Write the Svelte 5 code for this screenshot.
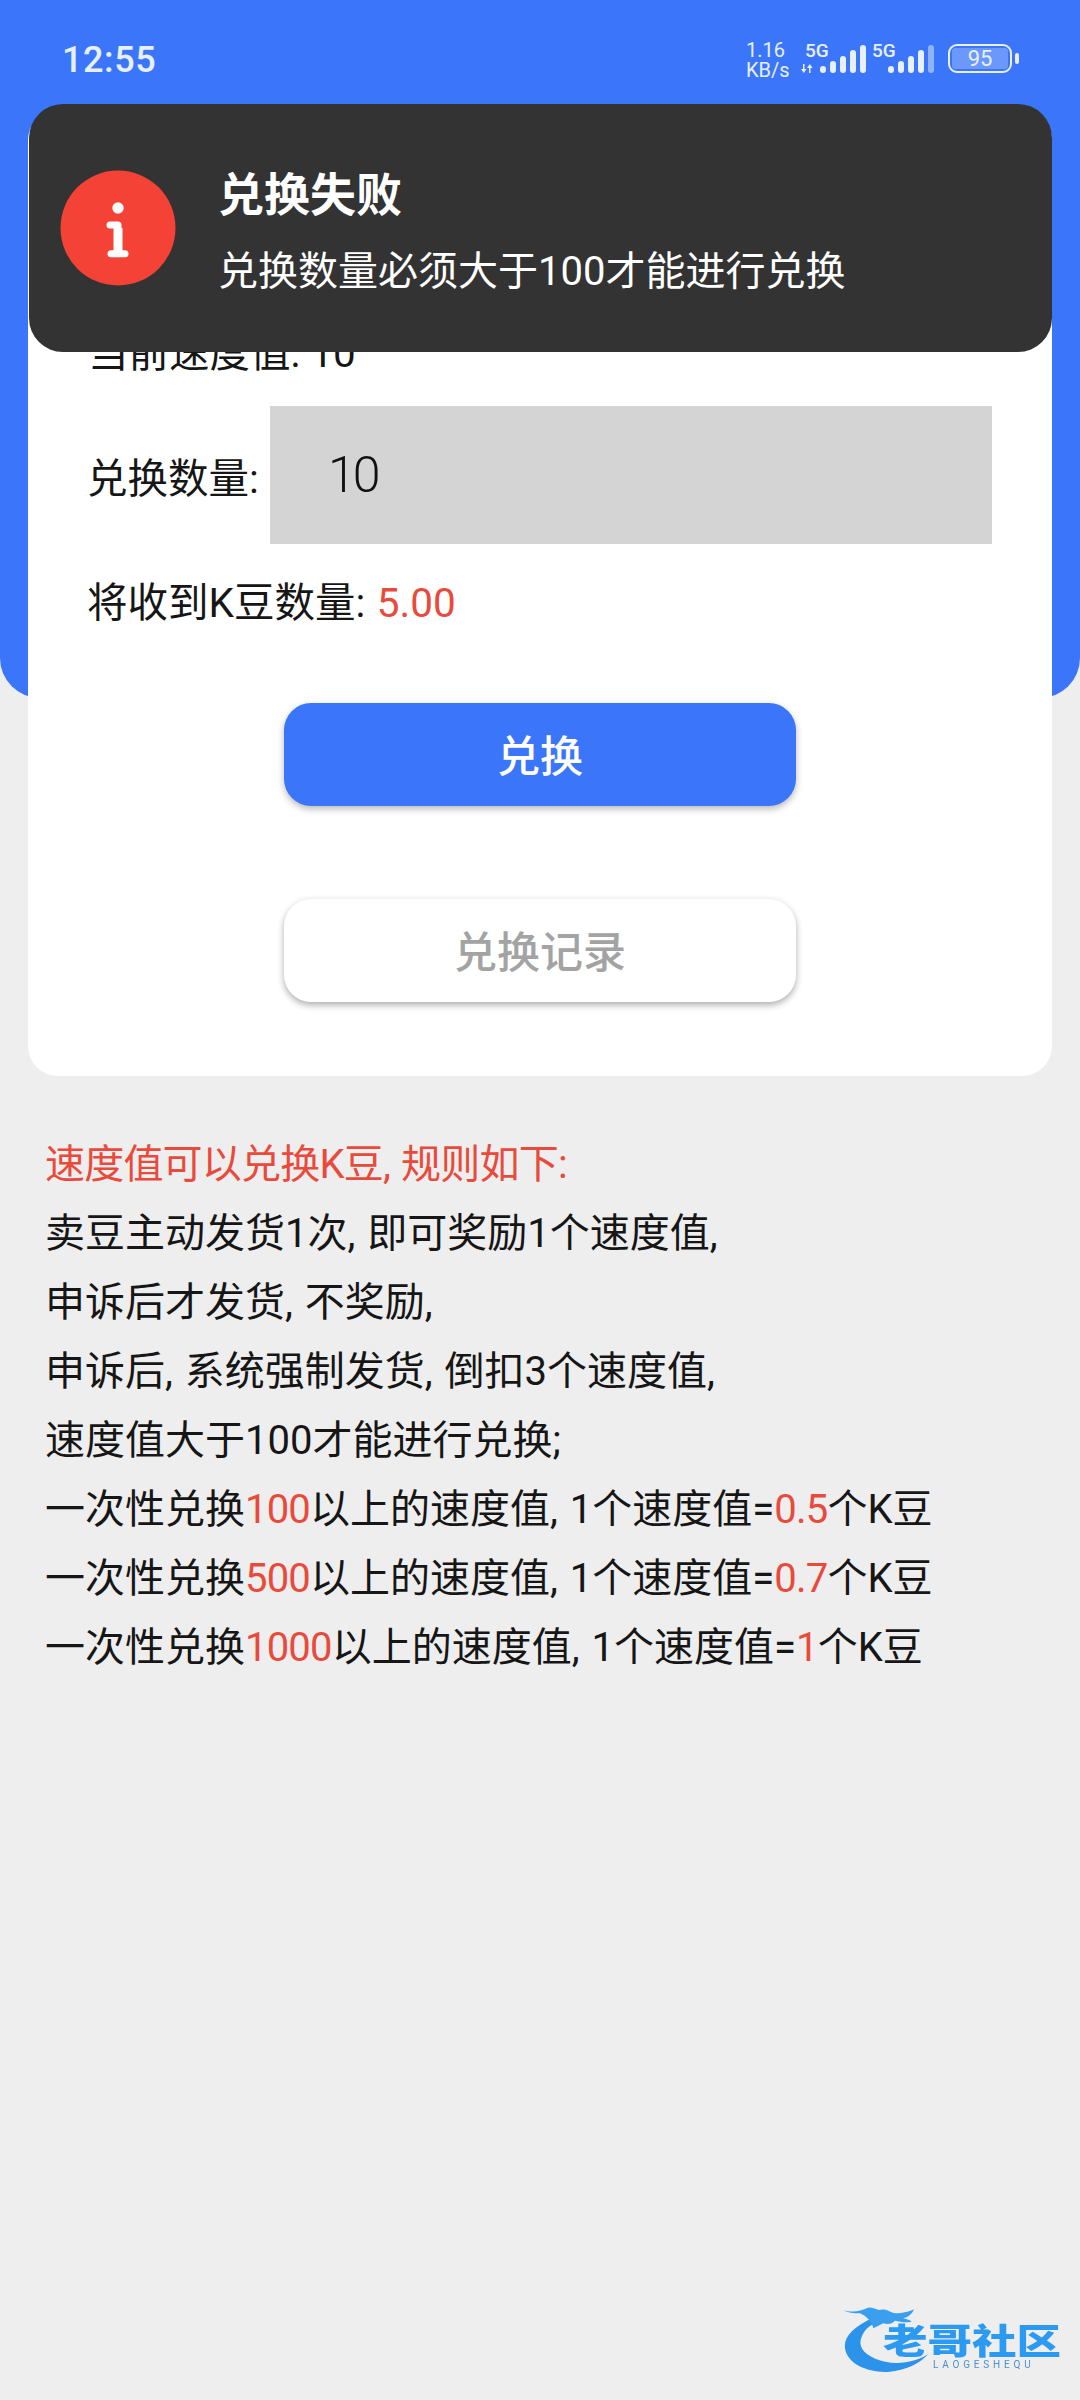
<script>
  const bars = [7, 12, 17, 23, 28];
  const rules = [
    [['速度值可以兑换K豆, 规则如下:', 1]],
    [['卖豆主动发货1次, 即可奖励1个速度值,', 0]],
    [['申诉后才发货, 不奖励,', 0]],
    [['申诉后, 系统强制发货, 倒扣3个速度值,', 0]],
    [['速度值大于100才能进行兑换;', 0]],
    [['一次性兑换', 0], ['100', 1], ['以上的速度值, 1个速度值=', 0], ['0.5', 1], ['个K豆', 0]],
    [['一次性兑换', 0], ['500', 1], ['以上的速度值, 1个速度值=', 0], ['0.7', 1], ['个K豆', 0]],
    [['一次性兑换', 0], ['1000', 1], ['以上的速度值, 1个速度值=', 0], ['1', 1], ['个K豆', 0]]
  ];
</script>

<div class="page">
  <header class="hero">
    <div class="status">
      <span class="time">12:55</span>
      <div class="indicators">
        <div class="speed"><span>1.16</span><span>KB/s</span></div>
        <div class="signal first">
          <span class="net">5G</span>
          <svg class="arrows" width="12" height="9" viewBox="0 0 12 9"><path d="M3.500 0v5H5.500L2.800 9 0 5h2V0zM8 9V4H6l2.800-4L11.500 4H9.500v5z" fill="#e8f0ff" /></svg>
          <div class="bars">{#each bars as h}<i style="height:{h}px"></i>{/each}</div>
        </div>
        <div class="signal second">
          <span class="net">5G</span>
          <div class="bars">{#each bars as h, i}<i class:dim={i === 4} style="height:{h}px"></i>{/each}</div>
        </div>
        <div class="battery"><div class="cell"><span>95</span></div><b></b></div>
      </div>
    </div>
  </header>

  <main class="card">
    <p class="current">当前速度值: 10</p>
    <div class="amount">
      <label for="qty">兑换数量:</label>
      <input id="qty" value="10" />
    </div>
    <p class="receive">将收到K豆数量: <em>5.00</em></p>
    <button class="primary">兑换</button>
    <button class="secondary">兑换记录</button>
  </main>

  <section class="rules">
    {#each rules as line}
      <p>{#each line as part}{#if part[1]}<em>{part[0]}</em>{:else}{part[0]}{/if}{/each}</p>
    {/each}
  </section>

  <div class="toast">
    <svg class="alert" width="116" height="116" viewBox="0 0 116 116">
      <circle cx="58" cy="58" r="57.500" fill="#f44336" />
      <circle cx="58" cy="38" r="5.700" fill="#fff" />
      <path d="M50 55h8v28" fill="none" stroke="#fff" stroke-width="7" stroke-linecap="round" stroke-linejoin="round" />
      <path d="M58 58v25" fill="none" stroke="#fff" stroke-width="9" />
      <path d="M51 83.700h14" fill="none" stroke="#fff" stroke-width="7" stroke-linecap="round" />
    </svg>
    <div class="msg">
      <strong>兑换失败</strong>
      <span>兑换数量必须大于100才能进行兑换</span>
    </div>
  </div>

  <div class="logo">
    <svg width="260" height="120" viewBox="0 0 780 360">
      <path d="M165 110C100 140 70 170 75 205C82 255 150 280 210 275C260 270 300 250 325 222C290 245 240 255 195 245C140 232 110 205 125 170C135 145 155 130 190 120Z" fill="#2b93ea" />
      <path d="M68 90C95 98 120 95 140 85C150 78 165 88 180 90C200 85 205 95 225 100C250 100 270 95 282 88C275 105 262 112 250 115C262 118 270 120 275 125C255 130 240 125 225 122C218 130 205 135 190 130L160 145C155 125 140 108 120 100C100 100 85 98 68 90Z" fill="#3a9fee" />
    </svg>
    <div class="brand">老哥社区</div>
    <div class="sub">LAOGESHEQU</div>
  </div>
</div>

<style>
  :global(body) {
    margin: 0;
    background: #eeeeee;
  }
  .page {
    position: relative;
    width: 1080px;
    height: 2400px;
    overflow: hidden;
    background: #eeeeee;
    font-family: Roboto, "Noto Sans CJK SC", sans-serif;
    color: #161616;
  }
  .hero {
    height: 698px;
    box-sizing: border-box;
    padding: 36px 61px 0 62px;
    background: #3b76fa;
    border-radius: 0 0 40px 40px;
  }
  .status {
    display: flex;
    justify-content: space-between;
    align-items: center;
    height: 48px;
    color: #e8f0ff;
  }
  .time {
    font-size: 36px;
    font-weight: 500;
    letter-spacing: 0.6px;
  }
  .indicators {
    display: flex;
    align-items: flex-end;
    height: 30px;
    margin-bottom: 4px;
  }
  .speed {
    display: flex;
    flex-direction: column;
    width: 55px;
    margin-bottom: -7px;
    font-size: 20px;
    line-height: 20px;
    font-weight: 400;
  }
  .signal {
    position: relative;
    display: flex;
    align-items: flex-end;
    height: 30px;
  }
  .arrows {
    margin-right: 7px;
  }
  .second .bars {
    margin-left: 22px;
  }
  .net {
    position: absolute;
    top: -2px;
    left: 4px;
    font-size: 19px;
    line-height: 20px;
    font-weight: 500;
  }
  .second .net {
    left: 6px;
  }
  .bars {
    display: flex;
    align-items: flex-end;
    gap: 4px;
  }
  .bars i {
    display: block;
    width: 6px;
    background: #e8f0ff;
    border-radius: 3px;
  }
  .bars i.dim {
    background: #8fb2fb;
  }
  .battery {
    display: flex;
    align-items: center;
    margin-left: 14px;
  }
  .cell {
    box-sizing: border-box;
    width: 64px;
    height: 29px;
    padding: 2px;
    border: 2.500px solid #e8f0ff;
    border-radius: 9px;
  }
  .cell span {
    display: flex;
    align-items: center;
    justify-content: center;
    height: 100%;
    background: #6d98fb;
    border-radius: 3px;
    font-size: 22px;
  }
  .battery b {
    display: block;
    width: 4px;
    height: 11px;
    margin-left: 3px;
    background: #e8f0ff;
    border-radius: 2px;
  }
  .card {
    position: relative;
    box-sizing: border-box;
    width: 1024px;
    height: 966px;
    margin: -588px 28px 0;
    padding: 216px 60px 0;
    background: #fff;
    border-radius: 30px;
    display: flex;
    flex-direction: column;
    font-size: 40.500px;
  }
  p {
    margin: 0;
  }
  .current {
    line-height: 54px;
  }
  .amount {
    display: flex;
    align-items: center;
    margin-top: 26px;
  }
  label {
    width: 183px;
    margin-left: -1px;
    flex: none;
  }
  input {
    box-sizing: border-box;
    width: 724px;
    height: 138px;
    padding: 0 0 0 58px;
    border: 0;
    border-radius: 0;
    background: #d4d4d4;
    color: #111;
    font: 300 50px Roboto, sans-serif;
    letter-spacing: -3px;
    outline: none;
  }
  .receive {
    margin-top: 32px;
    line-height: 54px;
    word-spacing: 1.500px;
    margin-left: -1px;
  }
  em {
    font-style: normal;
    color: #e84a3c;
  }
  button {
    display: block;
    align-self: center;
    width: 512px;
    height: 103px;
    padding: 0 0 4px;
    border: 0;
    border-radius: 27px;
    font-family: inherit;
    font-size: 43px;
    font-weight: 500;
  }
  .primary {
    margin-top: 73px;
    background: #3b76fa;
    color: #fff;
    box-shadow: 0 3px 7px rgba(0, 0, 0, 0.28);
  }
  .secondary {
    margin-top: 93px;
    background: #fff;
    color: #a3a3a3;
    box-shadow: 0 3px 7px rgba(0, 0, 0, 0.32);
  }
  .rules {
    margin: 54px 0 0 45px;
    font-size: 40px;
    line-height: 69px;
    word-spacing: 2px;
  }
  .rules p em {
    letter-spacing: -0.800px;
  }
  .toast {
    position: absolute;
    left: 29px;
    top: 104px;
    box-sizing: border-box;
    width: 1023px;
    height: 248px;
    padding: 0 0 0 31px;
    display: flex;
    align-items: center;
    gap: 42px;
    background: #333333;
    border-radius: 34px;
    color: #fff;
  }
  .alert {
    flex: none;
  }
  .msg {
    display: flex;
    flex-direction: column;
    gap: 21px;
    padding-top: 10px;
  }
  .msg strong {
    font-size: 46px;
    line-height: 56px;
    font-weight: 700;
  }
  .msg span {
    font-size: 40px;
    line-height: 56px;
  }
  .logo {
    position: absolute;
    left: 820px;
    top: 2280px;
    width: 260px;
    height: 120px;
    filter: blur(0.6px);
  }
  .logo svg {
    position: absolute;
    left: 0;
    top: 0;
  }
  .brand {
    position: absolute;
    left: 63px;
    top: 35px;
    font-size: 44.500px;
    line-height: 54px;
    font-weight: 900;
    color: #2b9af0;
    white-space: nowrap;
    transform: scaleY(0.8);
  }
  .sub {
    position: absolute;
    left: 113px;
    top: 79px;
    font-size: 10px;
    line-height: 12px;
    letter-spacing: 3.800px;
    color: #4a90d0;
    white-space: nowrap;
  }
</style>
